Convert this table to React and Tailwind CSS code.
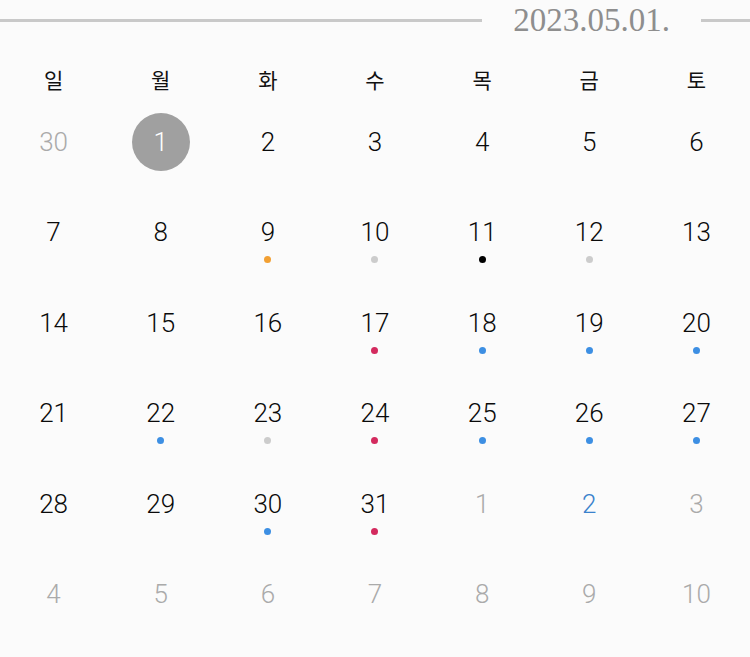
import React from 'react';

const WEEK = ['일', '월', '화', '수', '목', '금', '토'];

const DOT = {
  orange: 'bg-[#f2a033]',
  gray: 'bg-[#cccccc]',
  black: 'bg-black',
  red: 'bg-[#d32a5e]',
  blue: 'bg-[#3d8fe3]',
};

// tone: 'out' = other month, 'blue' = holiday
const days = [
  { d: 30, tone: 'out' }, { d: 1, selected: true }, { d: 2 }, { d: 3 }, { d: 4 }, { d: 5 }, { d: 6 },
  { d: 7 }, { d: 8 }, { d: 9, dot: 'orange' }, { d: 10, dot: 'gray' }, { d: 11, dot: 'black' }, { d: 12, dot: 'gray' }, { d: 13 },
  { d: 14 }, { d: 15 }, { d: 16 }, { d: 17, dot: 'red' }, { d: 18, dot: 'blue' }, { d: 19, dot: 'blue' }, { d: 20, dot: 'blue' },
  { d: 21 }, { d: 22, dot: 'blue' }, { d: 23, dot: 'gray' }, { d: 24, dot: 'red' }, { d: 25, dot: 'blue' }, { d: 26, dot: 'blue' }, { d: 27, dot: 'blue' },
  { d: 28 }, { d: 29 }, { d: 30, dot: 'blue' }, { d: 31, dot: 'red' }, { d: 1, tone: 'out' }, { d: 2, tone: 'blue' }, { d: 3, tone: 'out' },
  { d: 4, tone: 'out' }, { d: 5, tone: 'out' }, { d: 6, tone: 'out' }, { d: 7, tone: 'out' }, { d: 8, tone: 'out' }, { d: 9, tone: 'out' }, { d: 10, tone: 'out' },
];

const DayCell = ({ day }) => {
  const color =
    day.tone === 'out' ? 'text-[#aaaaaa]' : day.tone === 'blue' ? 'text-[#3a82cc]' : 'text-[#0a0a0a]';
  return (
    <div className="h-[90.4px] flex flex-col items-center pt-[27px]">
      {day.selected ? (
        <span className="-my-[14px] w-[58px] h-[58px] rounded-full bg-[#a0a0a0] text-white flex items-center justify-center text-[26px] font-light">
          {day.d}
        </span>
      ) : (
        <span className={`h-[30px] leading-[30px] text-[26px] font-light ${color}`}>{day.d}</span>
      )}
      {day.dot && <span className={`mt-[9px] w-[7px] h-[7px] rounded-full ${DOT[day.dot]}`} />}
    </div>
  );
};

export default function App() {
  return (
    <div className="w-[750px] h-[657px] overflow-hidden bg-[#fbfbfb] font-['Roboto',sans-serif]">
      <header className="h-[40px] flex items-center">
        <div className="flex-1 h-[3px] bg-[#c9c9c9]" />
        <span className="mx-[31px] font-['Liberation_Serif',serif] text-[33px] leading-none text-[#8e8e8e]">
          2023.05.01.
        </span>
        <div className="w-[49px] h-[3px] bg-[#c9c9c9]" />
      </header>

      <div className="mt-[20px] h-[40px] grid grid-cols-7 items-center">
        {WEEK.map((w) => (
          <span key={w} className="text-center text-[21px] text-[#111111] font-['Noto_Sans_CJK_KR',sans-serif]">
            {w}
          </span>
        ))}
      </div>

      <div className="grid grid-cols-7">
        {days.map((day, i) => (
          <DayCell key={i} day={day} />
        ))}
      </div>
    </div>
  );
}
